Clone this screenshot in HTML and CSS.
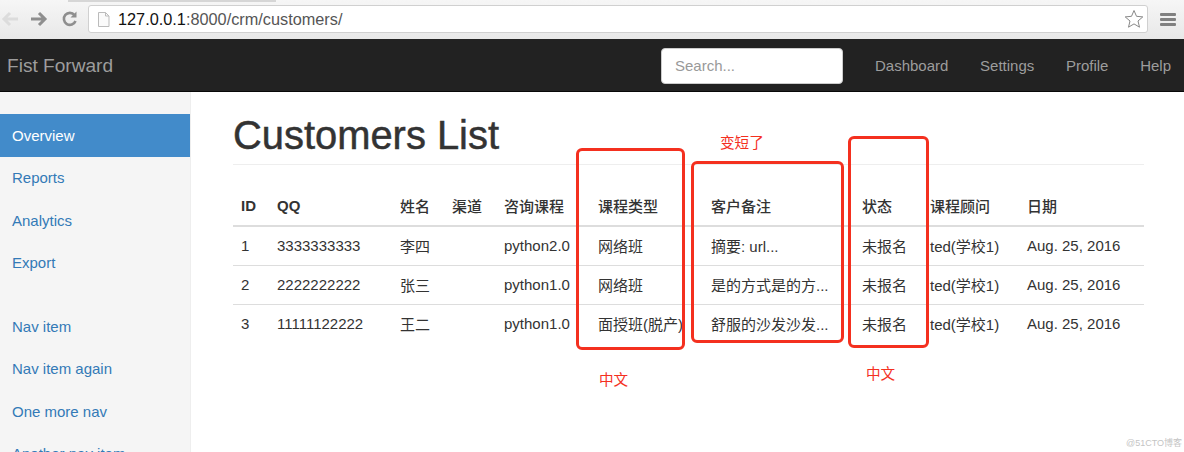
FILE: index.html
```html
<!DOCTYPE html>
<html lang="en">
<head>
  <meta charset="UTF-8">
  <title>Customers List</title>
  <link rel="stylesheet" href="styles.css">
</head>
<body>
  <div class="tab-edge"></div>
  <div class="browser-bar">
    <svg class="tool-icon" width="20" height="20" viewBox="0 0 20 20"><path d="M18 10H5M10 4l-6 6 6 6" fill="none" stroke="#dcdcdc" stroke-width="3"/></svg>
    <svg class="tool-icon" width="20" height="20" viewBox="0 0 20 20"><path d="M2 10h13M10 4l6 6-6 6" fill="none" stroke="#8e8e8e" stroke-width="3"/></svg>
    <svg class="tool-icon reload" width="18" height="18" viewBox="0 0 18 18"><path d="M14.5 11a6 6 0 1 1-1-6" fill="none" stroke="#8e8e8e" stroke-width="2.6"/><path d="M15.5 1.500v6h-6z" fill="#8e8e8e"/></svg>
    <div class="address">
      <svg width="13" height="15" viewBox="0 0 13 15"><path d="M1.500 .5h7l3.500 3.500v10.500h-10.500z" fill="#fafafa" stroke="#bbb"/><path d="M8.500 .5v3.500h3.500" fill="none" stroke="#bbb"/></svg>
      <span class="url"><span class="host">127.0.0.1</span>:8000/crm/customers/</span>
      <svg class="star" width="20" height="20" viewBox="0 0 20 20"><path d="M10 1.500l2.500 5.800 6.300.6-4.800 4.100 1.500 6.200-5.500-3.300-5.500 3.300 1.500-6.200-4.800-4.100 6.300-.6z" fill="#fff" stroke="#888"/></svg>
    </div>
    <div class="menu-icon"><i></i><i></i><i></i></div>
  </div>

  <nav class="navbar">
    <a class="brand" href="#">Fist Forward</a>
    <input class="search" type="text" placeholder="Search...">
    <ul class="nav-links">
      <li><a href="#">Dashboard</a></li>
      <li><a href="#">Settings</a></li>
      <li><a href="#">Profile</a></li>
      <li><a href="#">Help</a></li>
    </ul>
  </nav>

  <div class="page">
    <aside class="sidebar">
      <ul class="side-group">
        <li class="active"><a href="#">Overview</a></li>
        <li><a href="#">Reports</a></li>
        <li><a href="#">Analytics</a></li>
        <li><a href="#">Export</a></li>
      </ul>
      <ul class="side-group">
        <li><a href="#">Nav item</a></li>
        <li><a href="#">Nav item again</a></li>
        <li><a href="#">One more nav</a></li>
        <li><a href="#">Another nav item</a></li>
      </ul>
    </aside>

    <main class="main">
      <h1 class="page-title">Customers List</h1>
      <table class="customers">
        <colgroup>
          <col class="c-id"><col class="c-qq"><col class="c-name"><col class="c-channel"><col class="c-course">
          <col class="c-type"><col class="c-note"><col class="c-status"><col class="c-advisor"><col class="c-date">
        </colgroup>
        <thead>
          <tr><th>ID</th><th>QQ</th><th>姓名</th><th>渠道</th><th>咨询课程</th><th>课程类型</th><th>客户备注</th><th>状态</th><th>课程顾问</th><th>日期</th></tr>
        </thead>
        <tbody>
          <tr><td>1</td><td>3333333333</td><td>李四</td><td></td><td>python2.0</td><td>网络班</td><td>摘要: url...</td><td>未报名</td><td>ted(学校1)</td><td>Aug. 25, 2016</td></tr>
          <tr><td>2</td><td>2222222222</td><td>张三</td><td></td><td>python1.0</td><td>网络班</td><td>是的方式是的方...</td><td>未报名</td><td>ted(学校1)</td><td>Aug. 25, 2016</td></tr>
          <tr><td>3</td><td>11111122222</td><td>王二</td><td></td><td>python1.0</td><td>面授班(脱产)</td><td>舒服的沙发沙发...</td><td>未报名</td><td>ted(学校1)</td><td>Aug. 25, 2016</td></tr>
        </tbody>
      </table>
    </main>
  </div>

  <!-- red notes drawn on top of the screenshot -->
  <div class="mark mark-type"></div>
  <div class="mark mark-note"></div>
  <div class="mark mark-status"></div>
  <span class="note note-short">变短了</span>
  <span class="note note-type">中文</span>
  <span class="note note-status">中文</span>
  <span class="watermark">@51CTO博客</span>
</body>
</html>
```

FILE: styles.css
```css
* {
  margin: 0;
  padding: 0;
  box-sizing: border-box;
  font-family: "Liberation Sans", "Noto Sans CJK SC", sans-serif;
}

html, body {
  height: 452px;
  overflow: hidden;
}

body {
  position: relative;
  background: #fff;
  color: #333;
}

ul {
  list-style: none;
}

a {
  text-decoration: none;
}

.tab-edge {
  position: absolute;
  left: 68px;
  top: 0;
  width: 208px;
  height: 2px;
  background: #d6d6d6;
}

.browser-bar {
  height: 39px;
  display: flex;
  align-items: center;
  gap: 9px;
  padding: 0 8px 1px 0;
  background: linear-gradient(#f6f6f6, #e8e8e8);
}

.tool-icon {
  flex: none;
}

.reload {
  margin-left: 3px;
}

.address {
  flex: 1;
  height: 28px;
  margin-right: 3px;
  display: flex;
  align-items: center;
  gap: 8px;
  padding: 0 0 0 8px;
  background: #fff;
  border: 1px solid #d0d0d0;
  border-radius: 3px;
}

.url {
  font-size: 16.300px;
  color: #555;
}

.host {
  color: #111;
}

.star {
  margin-left: auto;
  margin-right: 3px;
}

.menu-icon {
  width: 16px;
  display: flex;
  flex-direction: column;
  gap: 2px;
}

.menu-icon i {
  height: 3px;
  background: #808080;
  border-radius: 1px;
}

.navbar {
  height: 53px;
  display: flex;
  align-items: center;
  padding: 1px 13px 0 7px;
  background: #222;
  border-bottom: 1px solid #080808;
}

.brand {
  font-size: 19.100px;
  color: #9d9d9d;
}

.search {
  width: 182px;
  height: 36px;
  margin-left: auto;
  padding: 0 13px;
  font-size: 15px;
  border: 1px solid #ccc;
  border-radius: 4px;
}

.search::placeholder {
  color: #999;
}

.nav-links {
  display: flex;
  gap: 31.700px;
  margin-left: 32px;
}

.nav-links a {
  font-size: 15px;
  color: #9d9d9d;
}

.page {
  display: flex;
  height: 360px;
}

.sidebar {
  width: 191px;
  flex: none;
  padding-top: 22px;
  background: #f5f5f5;
  border-right: 1px solid #eee;
}

.side-group {
  margin-bottom: 21px;
}

.side-group li {
  height: 42.500px;
  display: flex;
  align-items: center;
  padding-left: 12px;
  font-size: 15px;
}

.side-group a {
  color: #337ab7;
}

.side-group .active {
  background: #428bca;
}

.side-group .active a {
  color: #fff;
}

.main {
  flex: 1;
  padding: 21px 40px 0 42px;
}

.page-title {
  height: 52px;
  padding-bottom: 9px;
  font-size: 39.900px;
  font-weight: 500;
  line-height: 44px;
  color: #333;
  -webkit-text-stroke: 0.5px #333;
  border-bottom: 1px solid #eee;
}

.customers {
  width: 911px;
  margin-top: 21px;
  table-layout: fixed;
  border-collapse: collapse;
  font-size: 15px;
}

.c-id { width: 36px; }
.c-qq { width: 123px; }
.c-name { width: 52px; }
.c-channel { width: 52px; }
.c-course { width: 94px; }
.c-type { width: 113px; }
.c-note { width: 151px; }
.c-status { width: 68px; }
.c-advisor { width: 97px; }

.customers th {
  height: 40px;
  padding: 0 8px;
  text-align: left;
  font-weight: 700;
  border-bottom: 2px solid #ddd;
}

.customers td {
  height: 39px;
  padding: 0 8px;
  white-space: nowrap;
  border-bottom: 1px solid #ddd;
}

.customers th:nth-child(n+3) {
  font-weight: 500;
}

.customers tbody tr:last-child td {
  border-bottom: 0;
}

.mark {
  position: absolute;
  border: 3px solid #f4301f;
  border-radius: 6px;
}

.mark-type {
  left: 576px;
  top: 148px;
  width: 109px;
  height: 202px;
}

.mark-note {
  left: 691px;
  top: 161px;
  width: 153px;
  height: 182px;
}

.mark-status {
  left: 848px;
  top: 136px;
  width: 81px;
  height: 212px;
}

.note {
  position: absolute;
  font-size: 14.600px;
  line-height: 16px;
  color: #f4301f;
}

.note-short {
  left: 720px;
  top: 135px;
}

.note-type {
  left: 599px;
  top: 372px;
}

.note-status {
  left: 866px;
  top: 366px;
}

.watermark {
  position: absolute;
  left: 1126px;
  top: 436px;
  font-size: 9px;
  color: #c4c4c4;
}
```
